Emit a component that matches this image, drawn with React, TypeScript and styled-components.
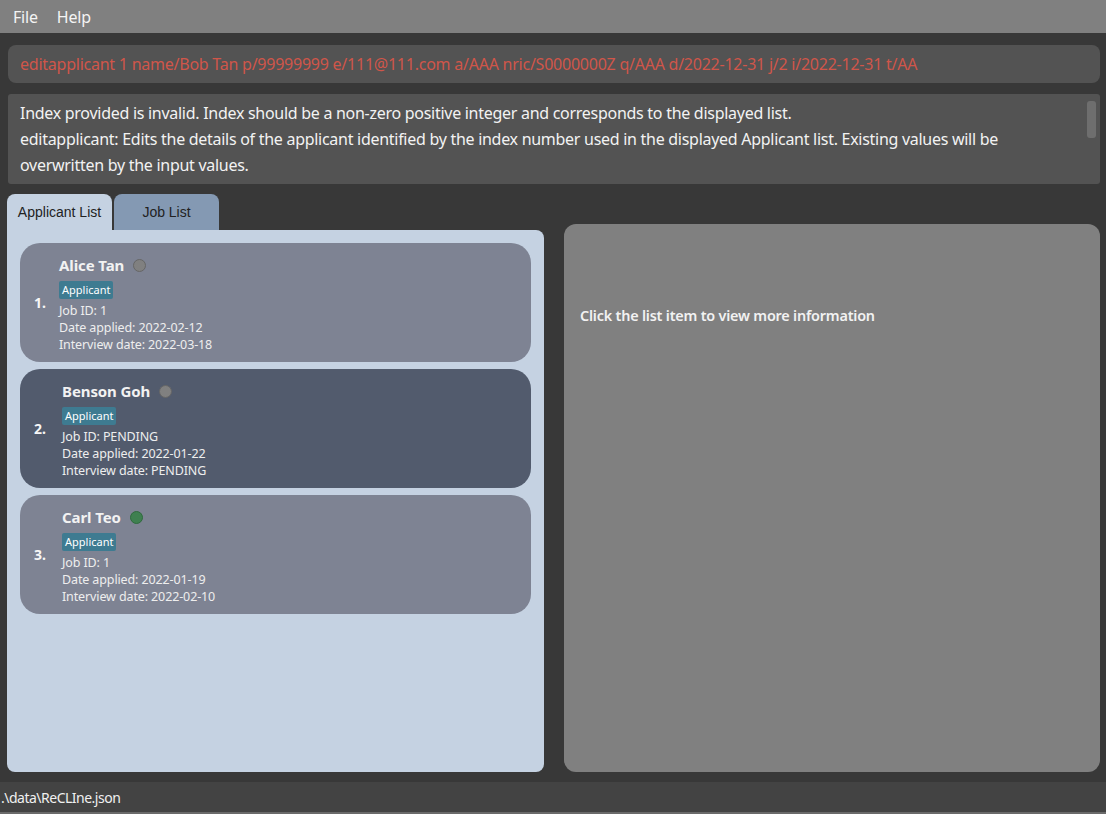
import styled, { createGlobalStyle } from "styled-components";

const GlobalStyle = createGlobalStyle`
  html, body {
    margin: 0;
    padding: 0;
    background: #383838;
  }
  body {
    font-family: "Noto Sans", "Open Sans", sans-serif;
  }
`;

type Applicant = {
  name: string;
  jobId: string;
  applied: string;
  interview: string;
  status: "none" | "done";
  selected?: boolean;
};

const applicants: Applicant[] = [
  { name: "Alice Tan", jobId: "1", applied: "2022-02-12", interview: "2022-03-18", status: "none" },
  {
    name: "Benson Goh",
    jobId: "PENDING",
    applied: "2022-01-22",
    interview: "PENDING",
    status: "none",
    selected: true,
  },
  { name: "Carl Teo", jobId: "1", applied: "2022-01-19", interview: "2022-02-10", status: "done" },
];

export default function App() {
  return (
    <>
      <GlobalStyle />
      <Window>
        <MenuBar>
          <MenuItem>File</MenuItem>
          <MenuItem>Help</MenuItem>
        </MenuBar>

        <Content>
          <CommandBox>
            editapplicant 1 name/Bob Tan p/99999999 e/111@111.com a/AAA nric/S0000000Z q/AAA
            d/2022-12-31 j/2 i/2022-12-31 t/AA
          </CommandBox>

          <ResultBox>
            <ResultText>
              Index provided is invalid. Index should be a non-zero positive integer and
              corresponds to the displayed list.
              <br />
              editapplicant: Edits the details of the applicant identified by the index number
              used in the displayed Applicant list. Existing values will be overwritten by the
              input values.
            </ResultText>
            <ScrollThumb />
          </ResultBox>

          <Panels>
            <LeftColumn>
              <TabRow>
                <Tab $active>Applicant List</Tab>
                <Tab>Job List</Tab>
              </TabRow>
              <ListPanel>
                {applicants.map((a, i) => (
                  <Card key={a.name} $selected={a.selected}>
                    <Index $wide={i > 0}>{i + 1}.</Index>
                    <CardBody>
                      <NameRow>
                        <Name>{a.name}</Name>
                        <StatusDot $done={a.status === "done"} />
                      </NameRow>
                      <Tag>Applicant</Tag>
                      <Detail>Job ID: {a.jobId}</Detail>
                      <Detail>Date applied: {a.applied}</Detail>
                      <Detail>Interview date: {a.interview}</Detail>
                    </CardBody>
                  </Card>
                ))}
              </ListPanel>
            </LeftColumn>

            <DetailPanel>
              <Hint>Click the list item to view more information</Hint>
            </DetailPanel>
          </Panels>
        </Content>

        <StatusBar>.\data\ReCLIne.json</StatusBar>
        <BottomStrip />
      </Window>
    </>
  );
}

const Window = styled.div`
  width: 1106px;
  height: 814px;
  display: flex;
  flex-direction: column;
  background: #383838;
  overflow: hidden;
`;

const MenuBar = styled.div`
  height: 33px;
  background: #808080;
  display: flex;
  align-items: center;
  padding-left: 13px;
  gap: 19px;
  flex-shrink: 0;
`;

const MenuItem = styled.span`
  color: #f4f4f4;
  font-size: 16px;
  letter-spacing: -0.2px;
`;

const Content = styled.div`
  flex: 1;
  display: flex;
  flex-direction: column;
  padding: 12px 6px 10px 8px;
  min-height: 0;
`;

const CommandBox = styled.div`
  height: 38px;
  background: #535353;
  border-radius: 8px;
  color: #d0564a;
  font-size: 16px;
  letter-spacing: -0.24px;
  display: flex;
  align-items: center;
  padding-left: 12px;
  white-space: nowrap;
  overflow: hidden;
  flex-shrink: 0;
`;

const ResultBox = styled.div`
  margin-top: 11px;
  height: 90px;
  background: #535353;
  border-radius: 3px;
  position: relative;
  flex-shrink: 0;
  padding: 6px 30px 0 12px;
  box-sizing: border-box;
`;

const ResultText = styled.div`
  color: #f2f2f2;
  font-size: 16px;
  line-height: 26px;
  letter-spacing: -0.28px;
  max-width: 985px;
`;

const ScrollThumb = styled.div`
  position: absolute;
  right: 4px;
  top: 7px;
  width: 9px;
  height: 37px;
  border-radius: 3px;
  background: #6e6e6e;
`;

const Panels = styled.div`
  flex: 1;
  margin-top: 10px;
  display: grid;
  grid-template-columns: 537px 536px;
  column-gap: 20px;
  margin-left: -1px;
  min-height: 0;
`;

const LeftColumn = styled.div`
  display: flex;
  flex-direction: column;
  min-height: 0;
`;

const TabRow = styled.div`
  display: flex;
  gap: 2px;
  height: 36px;
  align-items: flex-end;
`;

const Tab = styled.div<{ $active?: boolean }>`
  width: 105px;
  height: 36px;
  box-sizing: border-box;
  padding-top: 10px;
  text-align: center;
  border-radius: 8px 8px 0 0;
  background: ${(p) => (p.$active ? "#c5d2e2" : "#8499b3")};
  color: #222;
  font-family: "Liberation Sans", Arial, sans-serif;
  font-size: 14px;
`;

const ListPanel = styled.div`
  flex: 1;
  background: #c5d2e2;
  border-radius: 0 8px 8px 8px;
  padding: 13px 13px 0 13px;
  display: flex;
  flex-direction: column;
  gap: 7px;
`;

const Card = styled.div<{ $selected?: boolean }>`
  height: 119px;
  box-sizing: border-box;
  border-radius: 20px;
  background: ${(p) => (p.$selected ? "#525b6d" : "#7e8393")};
  display: flex;
  align-items: flex-start;
  padding: 11px 0 0 14px;
`;

const Index = styled.div<{ $wide?: boolean }>`
  align-self: center;
  color: #f6f6f6;
  font-weight: 700;
  font-size: 14px;
  width: ${(p) => (p.$wide ? "28px" : "25px")};
  margin-top: -12px;
`;

const CardBody = styled.div`
  display: flex;
  flex-direction: column;
  align-items: flex-start;
`;

const NameRow = styled.div`
  display: flex;
  align-items: center;
  gap: 9px;
  height: 22px;
`;

const Name = styled.span`
  color: #f2f2f2;
  font-weight: 700;
  font-size: 15px;
  letter-spacing: -0.1px;
`;

const StatusDot = styled.span<{ $done?: boolean }>`
  width: 11px;
  height: 11px;
  border-radius: 50%;
  background: ${(p) => (p.$done ? "#3f8050" : "#808080")};
  border: 1px solid ${(p) => (p.$done ? "#2f6a3d" : "#666")};
`;

const Tag = styled.span`
  margin-top: 5px;
  margin-bottom: 3px;
  background: #3e7b91;
  color: #ffffff;
  font-size: 11px;
  line-height: 18px;
  padding: 0 3px;
  border-radius: 2px;
`;

const Detail = styled.div`
  color: #eeeeee;
  font-size: 12.5px;
  line-height: 17px;
  letter-spacing: -0.12px;
`;

const DetailPanel = styled.div`
  margin-top: 30px;
  background: #808080;
  border-radius: 12px;
  padding: 82px 16px 0 16px;
`;

const Hint = styled.div`
  color: #f2f2f2;
  font-size: 14.4px;
  font-weight: 600;
  letter-spacing: -0.2px;
`;

const StatusBar = styled.div`
  height: 30px;
  background: #434343;
  color: #f0f0f0;
  font-size: 14px;
  letter-spacing: -0.5px;
  display: flex;
  align-items: center;
  padding-left: 1px;
  flex-shrink: 0;
`;

const BottomStrip = styled.div`
  height: 2px;
  background: #6a6a6a;
  flex-shrink: 0;
`;
